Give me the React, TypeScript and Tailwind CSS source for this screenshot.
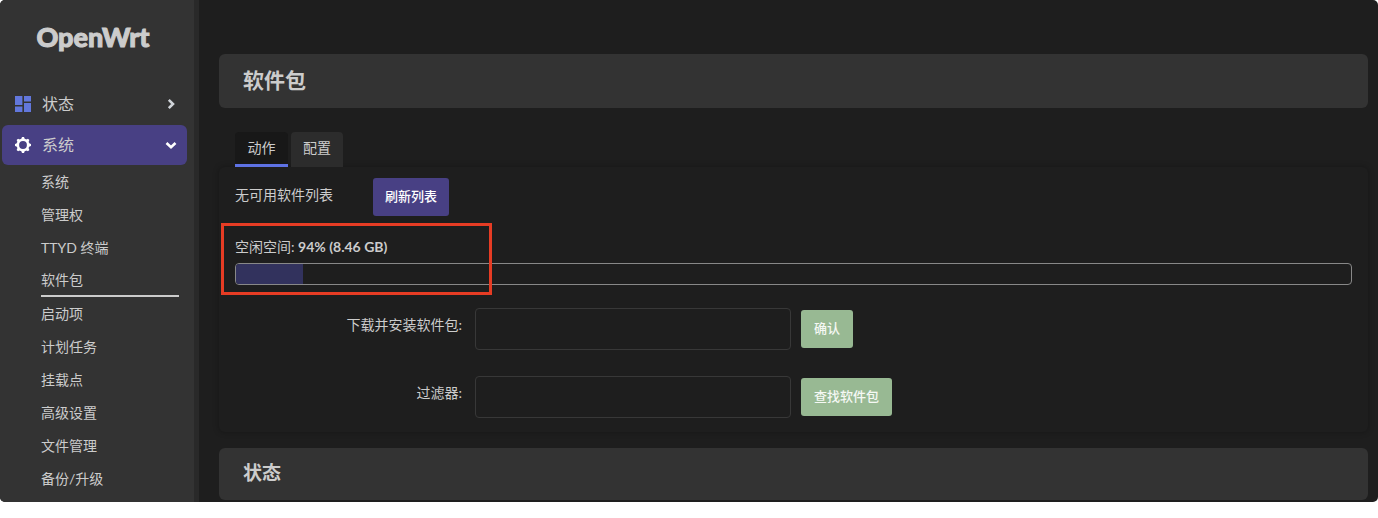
import type { ReactNode } from "react";

const systemLinks = [
  "系统",
  "管理权",
  "TTYD 终端",
  "软件包",
  "启动项",
  "计划任务",
  "挂载点",
  "高级设置",
  "文件管理",
  "备份/升级",
];

function DashboardIcon() {
  return (
    <svg className="h-4 w-4" viewBox="0 0 16 16" fill="#6277dc" aria-hidden="true">
      <path d="M0 0h7.400v9H0zM0 10.600h7.400V16H0zM9 0h7v5.400H9zM9 7h7v9H9z" />
    </svg>
  );
}

function GearIcon() {
  const teeth = [0, 45, 90, 135, 180, 225, 270, 315];
  return (
    <svg className="h-4 w-4" viewBox="0 0 16 16" aria-hidden="true">
      <circle cx="8" cy="8" r="5.2" fill="none" stroke="#fff" strokeWidth="2.6" />
      {teeth.map((angle) => (
        <path key={angle} d="M6.2 2.200 7 0h2l.8 2.200z" fill="#fff" transform={`rotate(${angle} 8 8)`} />
      ))}
    </svg>
  );
}

function Chevron({ open }: { open?: boolean }) {
  return (
    <svg
      className={open ? "h-3 w-3 text-white" : "h-3 w-3 text-[#cfd3d8]"}
      viewBox="0 0 12 12"
      fill="none"
      stroke="currentColor"
      strokeWidth="2.6"
      aria-hidden="true"
    >
      <path d={open ? "M1.5 4 6 8.2 10.5 4" : "M3.8 1.800 8 6l-4.200 4.200"} />
    </svg>
  );
}

function Sidebar() {
  return (
    <aside className="w-[199px] shrink-0 border-r-5 border-[#292929] bg-[#333]">
      <a
        href="#home"
        className="flex h-[74px] items-center justify-center pr-2 text-[27px] font-black text-[#ccc] [-webkit-text-stroke:1px_#ccc]"
      >
        OpenWrt
      </a>
      <nav className="mt-[10px] text-[#ccc]">
        <button type="button" className="mx-[2px] flex h-10 w-[185px] items-center pl-[13px] pr-[10px] text-base">
          <DashboardIcon />
          <span className="ml-[11px] flex-1 text-left">状态</span>
          <Chevron />
        </button>
        <button
          type="button"
          aria-expanded="true"
          className="mx-[2px] mt-px flex h-10 w-[185px] items-center rounded-md bg-[#484084] pl-[13px] pr-[10px] text-base"
        >
          <GearIcon />
          <span className="ml-[11px] flex-1 text-left">系统</span>
          <Chevron open />
        </button>
        <ul className="ml-[41px] mr-[15px]">
          {systemLinks.map((label) => (
            <li key={label}>
              <a
                href="#system"
                className={
                  label === "软件包"
                    ? "flex h-[33px] items-center border-b-2 border-[#ccc] text-sm"
                    : "flex h-[33px] items-center text-sm"
                }
              >
                {label}
              </a>
            </li>
          ))}
        </ul>
      </nav>
    </aside>
  );
}

function FieldRow({ id, label, children }: { id: string; label: string; children: ReactNode }) {
  return (
    <div className="flex items-start">
      <label htmlFor={id} className="w-[227px] pt-[7px] text-right text-sm leading-5">
        {label}
      </label>
      <input id={id} type="text" className="ml-[13px] h-[42px] w-[316px] rounded border border-[#383838] bg-transparent px-3" />
      <button
        type="button"
        className="ml-[10px] mt-[2px] h-[38px] rounded-[3px] bg-[#98b993] px-[13px] text-[13px] font-medium text-white/90"
      >
        {children}
      </button>
    </div>
  );
}

export default function App() {
  return (
    <div className="bg-white font-['Lato','Noto_Sans_CJK_SC',sans-serif]">
      <div className="flex overflow-hidden rounded-[5px] bg-[#1e1e1e] text-[#ccc]">
        <Sidebar />
        <main className="min-w-0 flex-1 pb-[2px] pl-5 pr-[10px] pt-[54px]">
          <h2 className="flex h-[54px] items-center rounded-md bg-[#333] px-6 pb-[2px] text-[21px] font-bold">软件包</h2>

          <div role="tablist" className="mt-6 ml-4 flex gap-[3px] text-sm">
            <button
              type="button"
              role="tab"
              aria-selected="true"
              className="h-[35px] w-[53px] rounded-t border-b-3 border-[#5e72e4] bg-[#181818]"
            >
              动作
            </button>
            <button
              type="button"
              role="tab"
              aria-selected="false"
              className="h-[35px] w-[52px] rounded-t border-b-3 border-[#2c2c2c] bg-[#2c2c2c]"
            >
              配置
            </button>
          </div>

          <section className="rounded-md px-4 pb-[14px] pt-[11px] shadow-[0_0_6px_rgba(0,0,0,0.3)]">
            <div className="flex h-[38px] items-center text-sm">
              <span className="w-[138px] pb-1">无可用软件列表</span>
              <button type="button" className="h-full rounded-[3px] bg-[#484084] px-3 pb-[2px] text-[13px] font-medium text-white">
                刷新列表
              </button>
            </div>

            <div className="relative mt-[21px]">
              <p className="text-sm leading-5">
                空闲空间: <strong>94% (8.46 GB)</strong>
              </p>
              <div
                role="progressbar"
                aria-label="空闲空间"
                aria-valuenow={6}
                className="mt-[6px] h-[22px] overflow-hidden rounded border border-[#888]"
              >
                <div className="h-full w-[6%] bg-[#32325d]" />
              </div>
              {/* highlight around the free space reading */}
              <div className="pointer-events-none absolute -left-[14px] -top-[14px] h-[72px] w-[271px] border-3 border-[#e63c24]" />
            </div>

            <div className="mt-[23px] flex flex-col gap-[26px]">
              <FieldRow id="install" label="下载并安装软件包:">
                确认
              </FieldRow>
              <FieldRow id="filter" label="过滤器:">
                查找软件包
              </FieldRow>
            </div>
          </section>

          <h3 className="mt-4 flex h-[52px] items-center rounded-md bg-[#333] px-6 pb-[2px] text-[19px] font-bold">状态</h3>
        </main>
      </div>
    </div>
  );
}
